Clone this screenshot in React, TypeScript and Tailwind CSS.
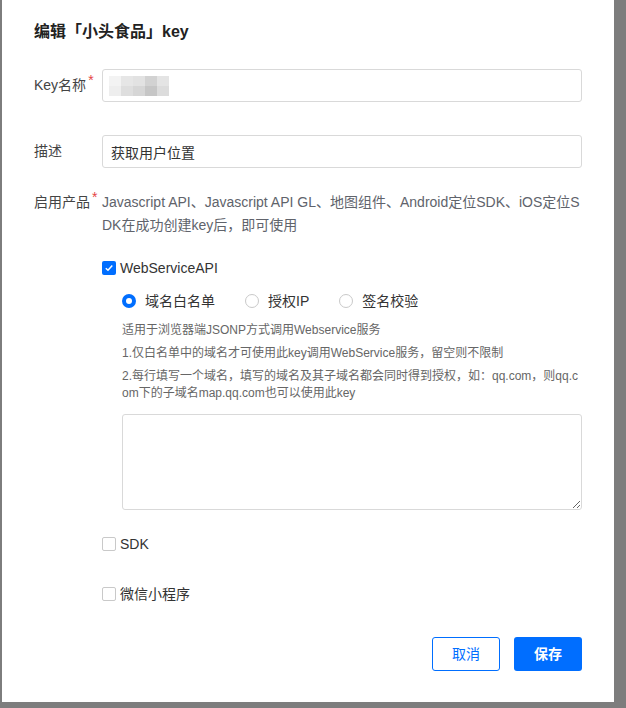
import React, { useState } from 'react';

const font = { fontFamily: '"Liberation Sans", "Noto Sans CJK SC", sans-serif' };

function Checkbox({ checked, label }: { checked: boolean; label: string }) {
  return (
    <label className="flex h-[20px] items-center text-[14px] text-[#333]">
      {checked ? (
        <span className="flex h-[14px] w-[14px] items-center justify-center rounded-[2px] bg-[#006eff]">
          <svg width="10" height="10" viewBox="0 0 10 10" fill="none">
            <path d="M1.8 5.2 L4 7.3 L8.3 2.6" stroke="white" strokeWidth="1.5" />
          </svg>
        </span>
      ) : (
        <span className="h-[14px] w-[14px] rounded-[2px] border border-[#c9c9c9] bg-white" />
      )}
      <span className="ml-[4px]">{label}</span>
    </label>
  );
}

function Radio({ checked, label }: { checked: boolean; label: string }) {
  return (
    <label className="flex h-[20px] items-center text-[14px] text-[#333]">
      {checked ? (
        <span className="flex h-[14px] w-[14px] items-center justify-center rounded-full bg-[#006eff]">
          <span className="h-[6px] w-[6px] rounded-full bg-white" />
        </span>
      ) : (
        <span className="h-[14px] w-[14px] rounded-full border border-[#c9c9c9] bg-white" />
      )}
      <span className="ml-[9px]">{label}</span>
    </label>
  );
}

// blurred / mosaic value of the key name
const mosaic = [
  ['#f3f3f3', '#e6e6e6', '#e2e2e2', '#d2d2d2', '#e4e4e4'],
  ['#eeeeee', '#dedede', '#d6d6d6', '#c6c6c6', '#dcdcdc'],
];

export default function App() {
  const [desc, setDesc] = useState('获取用户位置');

  return (
    <div className="h-[708px] w-[626px] overflow-hidden bg-[#7d7d7d] pl-[2px]" style={font}>
      <div className="h-[702px] w-[612px] bg-white pl-[32px] pr-[32px]">
        <h2 className="pt-[20px] text-[16px] leading-[24px] font-bold text-[#222]">编辑「小头食品」key</h2>

        {/* Key名称 */}
        <div className="mt-[25px] flex items-center">
          <div className="w-[68px] text-[14px] text-[#444]">
            Key名称<span className="relative top-[-5px] ml-[2px] text-[#e54545]">*</span>
          </div>
          <div className="flex h-[33px] w-[480px] items-center rounded-[3px] border border-[#d9d9d9] pl-[6px]">
            <div className="flex flex-col">
              {mosaic.map((row, i) => (
                <div key={i} className="flex">
                  {row.map((c, j) => (
                    <span key={j} className="h-[10px] w-[12px]" style={{ backgroundColor: c }} />
                  ))}
                </div>
              ))}
            </div>
          </div>
        </div>

        {/* 描述 */}
        <div className="mt-[33px] flex items-center">
          <div className="w-[68px] text-[14px] text-[#444]">描述</div>
          <input
            value={desc}
            onChange={(e) => setDesc(e.target.value)}
            className="h-[33px] w-[480px] rounded-[3px] border border-[#d9d9d9] px-[8px] text-[14px] text-[#333] outline-none"
          />
        </div>

        {/* 启用产品 */}
        <div className="mt-[23px] flex">
          <div className="w-[68px] text-[14px] leading-[23px] text-[#444]">
            启用产品<span className="relative top-[-5px] ml-[2px] text-[#e54545]">*</span>
          </div>
          <div className="w-[480px]">
            <p className="text-[14px] leading-[23px] text-[#60636b]">
              Javascript API、Javascript API GL、地图组件、Android定位SDK、iOS定位S
              <br />
              DK在成功创建key后，即可使用
            </p>

            <div className="mt-[21px]">
              <Checkbox checked label="WebServiceAPI" />
            </div>

            <div className="ml-[20px] mt-[13px]">
              <div className="flex gap-[30px]">
                <Radio checked label="域名白名单" />
                <Radio checked={false} label="授权IP" />
                <Radio checked={false} label="签名校验" />
              </div>

              <div className="mt-[11px] w-[460px] text-[12px] leading-[17px] text-[#666]">
                <p>适用于浏览器端JSONP方式调用Webservice服务</p>
                <p className="mt-[6px]">1.仅白名单中的域名才可使用此key调用WebService服务，留空则不限制</p>
                <p className="mt-[6px]">
                  2.每行填写一个域名，填写的域名及其子域名都会同时得到授权，如：qq.com，则qq.c
                  <br />
                  om下的子域名map.qq.com也可以使用此key
                </p>
              </div>

              <textarea className="mt-[12px] block h-[96px] w-[460px] rounded-[3px] border border-[#d9d9d9] outline-none" />
            </div>

            <div className="mt-[24px]">
              <Checkbox checked={false} label="SDK" />
            </div>
            <div className="mt-[30px]">
              <Checkbox checked={false} label="微信小程序" />
            </div>
          </div>
        </div>

        {/* footer buttons */}
        <div className="mt-[33px] flex justify-end gap-[14px]">
          <button className="h-[34px] w-[68px] rounded-[3px] border border-[#006eff] bg-white text-[14px] text-[#006eff]">
            取消
          </button>
          <button className="h-[34px] w-[68px] rounded-[3px] bg-[#006eff] text-[14px] font-bold text-white">
            保存
          </button>
        </div>
      </div>
    </div>
  );
}
